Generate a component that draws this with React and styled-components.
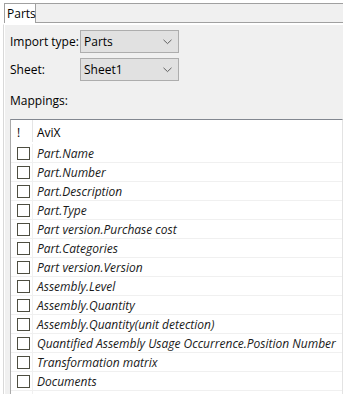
import React from "react";
import styled, { createGlobalStyle } from "styled-components";

const GlobalStyle = createGlobalStyle`
  body {
    margin: 0;
    background: #ffffff;
    font-family: "Open Sans", "Noto Sans", sans-serif;
    font-size: 12px;
    color: #000;
  }
`;

const mappings = [
  "Part.Name",
  "Part.Number",
  "Part.Description",
  "Part.Type",
  "Part version.Purchase cost",
  "Part.Categories",
  "Part version.Version",
  "Assembly.Level",
  "Assembly.Quantity",
  "Assembly.Quantity(unit detection)",
  "Quantified Assembly Usage Occurrence.Position Number",
  "Transformation matrix",
  "Documents",
  "",
];

const Chevron = () => (
  <svg width="9" height="6" viewBox="0 0 9 6">
    <path d="M0.5 0.8 L4.5 4.6 L8.5 0.8" fill="none" stroke="#606060" strokeWidth="1" />
  </svg>
);

const Select = ({ value }) => (
  <SelectBox>
    <span>{value}</span>
    <Chevron />
  </SelectBox>
);

const App = () => {
  return (
    <Window>
      <GlobalStyle />
      <TabStrip>
        <Tab>Parts</Tab>
        <TabFiller />
      </TabStrip>

      <Panel>
        <Form>
          <Label>Import type:</Label>
          <Select value="Parts" />
          <Label>Sheet:</Label>
          <Select value="Sheet1" />
        </Form>

        <Caption>Mappings:</Caption>

        <List>
          <Header>
            <HeadCell>!</HeadCell>
            <HeadCell $divider>AviX</HeadCell>
          </Header>
          {mappings.map((name, i) => (
            <Row key={i}>
              <CheckCell>{name && <Box />}</CheckCell>
              <NameCell>{name}</NameCell>
            </Row>
          ))}
        </List>
      </Panel>
    </Window>
  );
};

export default App;

const Window = styled.div`
  width: 343px;
  height: 394px;
  overflow: hidden;
  padding-top: 3px;
  box-sizing: border-box;
  display: flex;
  flex-direction: column;
`;

const TabStrip = styled.div`
  display: flex;
  height: 20px;
`;

const Tab = styled.div`
  margin-left: 4px;
  width: 32px;
  border: 1px solid #a0a0a0;
  border-bottom: none;
  background: #fff;
  font-size: 12px;
  line-height: 19px;
  padding-left: 2px;
  box-sizing: border-box;
  color: #000;
`;

const TabFiller = styled.div`
  flex: 1;
  background: #f0f0f0;
  border-top: 1px solid #a0a0a0;
  border-bottom: 1px solid #a0a0a0;
`;

const Panel = styled.div`
  flex: 1;
  margin: 1px 0 0 3px;
  border-left: 1px solid #d9d9d9;
  border-top: 1px solid #ffffff;
  background: #f0f0f0;
  box-shadow: inset 1px 0 0 #ffffff;
  padding: 5px 0 0 6px;
  display: flex;
  flex-direction: column;
`;

const Form = styled.div`
  display: grid;
  grid-template-columns: 70px 99px;
  row-gap: 5px;
  align-items: center;
`;

const Label = styled.div`
  font-size: 12px;
`;

const SelectBox = styled.div`
  height: 23px;
  box-sizing: border-box;
  border: 1px solid #adadad;
  background: #e1e1e1;
  display: flex;
  align-items: center;
  justify-content: space-between;
  padding: 0 6px 0 3px;
  font-size: 12px;
`;

const Caption = styled.div`
  font-size: 12px;
  margin-top: 12px;
  height: 26px;
  line-height: 16px;
`;

const List = styled.div`
  flex: 1;
  background: #fff;
  border-top: 1px solid #828790;
  border-left: 1px solid #a9a9a9;
  border-right: 1px solid #e3e3e3;
  display: flex;
  flex-direction: column;
`;

const Header = styled.div`
  display: grid;
  grid-template-columns: 21px 1fr;
  height: 24px;
  flex-shrink: 0;
`;

const HeadCell = styled.div`
  font-size: 12px;
  display: flex;
  align-items: center;
  padding: 3px 0 0 ${(p) => (p.$divider ? "4px" : "6px")};
  border-left: ${(p) => (p.$divider ? "1px solid #e5e5e5" : "none")};
  margin-bottom: 2px;
`;

const Row = styled.div`
  display: grid;
  grid-template-columns: 21px 1fr;
  height: 19px;
  flex-shrink: 0;
  box-sizing: border-box;
  border-bottom: 1px solid #f0f0f0;
`;

const CheckCell = styled.div`
  display: flex;
  align-items: center;
  padding-left: 6px;
`;

const Box = styled.span`
  width: 13px;
  height: 13px;
  box-sizing: border-box;
  border: 1px solid #4d4d40;
  background: #fff;
`;

const NameCell = styled.div`
  border-left: 1px solid #f0f0f0;
  padding-left: 4px;
  font-style: italic;
  font-size: 12px;
  color: #1a1a1a;
  display: flex;
  align-items: center;
  white-space: nowrap;
`;
